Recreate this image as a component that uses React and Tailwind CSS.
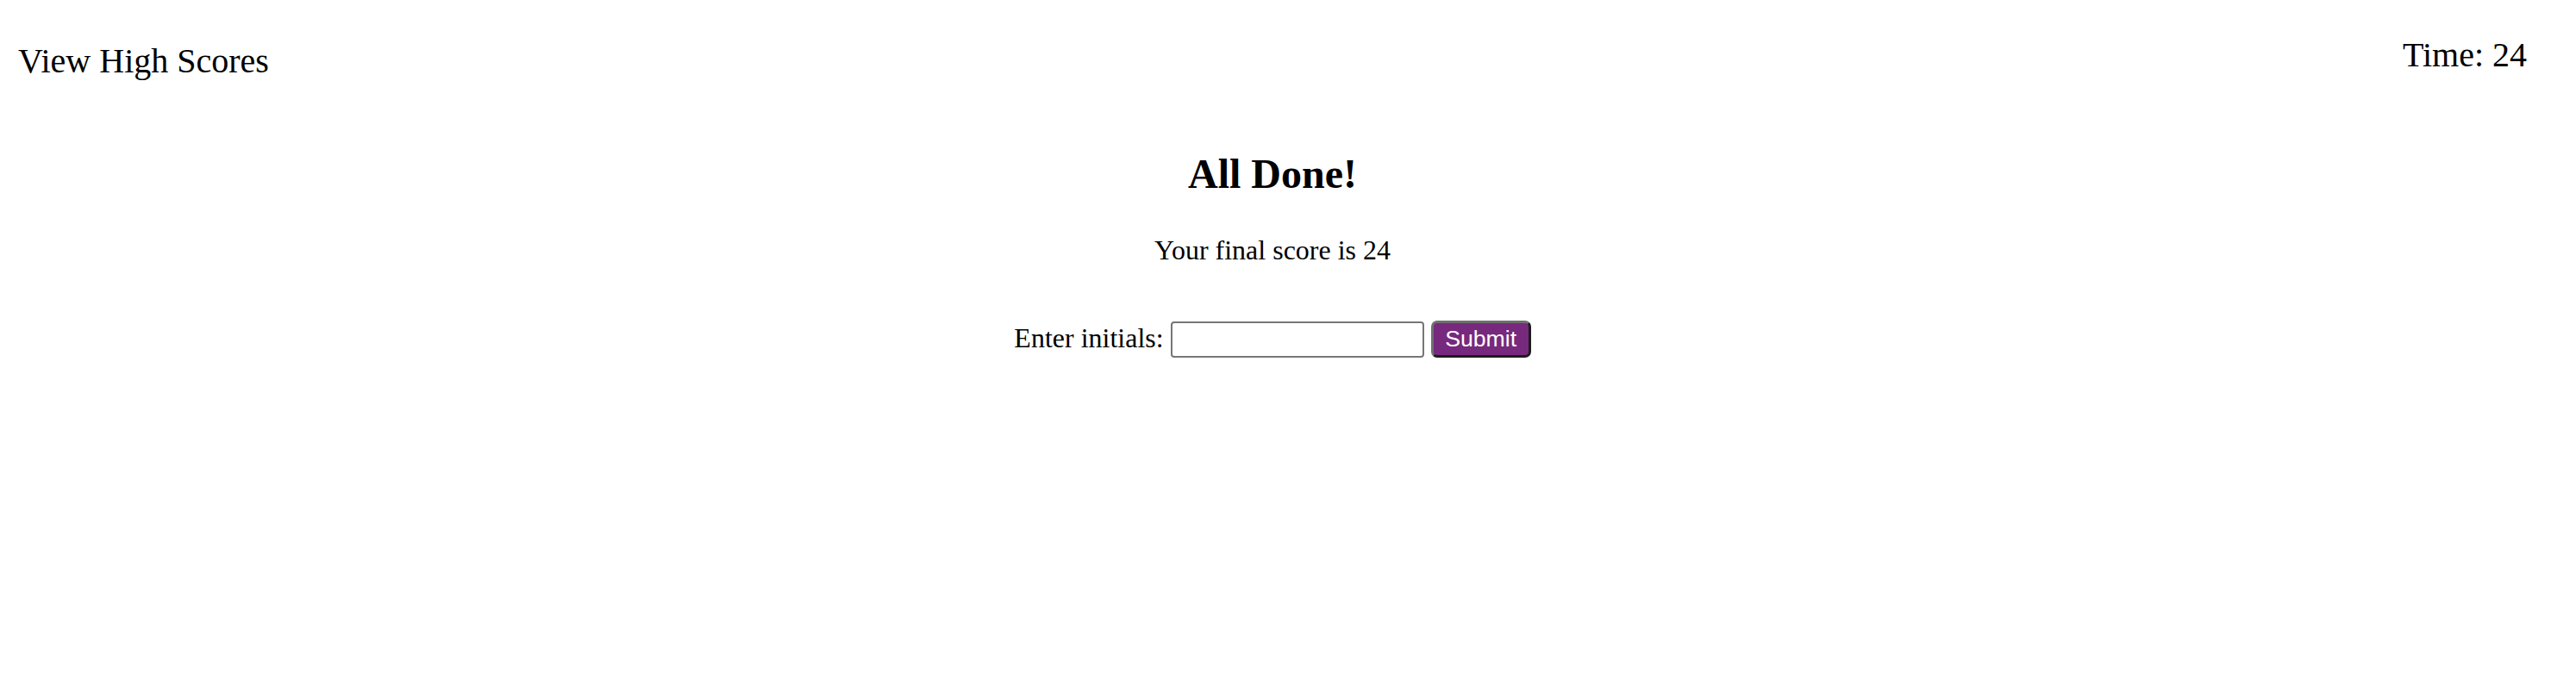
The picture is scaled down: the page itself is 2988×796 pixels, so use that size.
export default function App() {
  return (
    <div className="w-[2952px] min-h-[796px] bg-white text-black font-['Liberation_Serif','Times_New_Roman',serif]">
      {/* Header */}
      <header className="flex items-start justify-between px-[21px] pt-[44px]">
        <a className="pt-[7px] text-[40px] leading-none">View High Scores</a>
        <p className="text-[40px] leading-none">Time: 24</p>
      </header>

      {/* Result */}
      <main className="mt-[87px] flex flex-col items-center text-center">
        <h2 className="text-[48px] leading-none font-bold">All Done!</h2>
        <p className="mt-[48px] text-[32px] leading-none">Your final score is 24</p>
        <form className="mt-[66px] flex items-center gap-2">
          <label className="mb-[4px] text-[32px] leading-none">Enter initials:</label>
          <input
            type="text"
            className="w-[294px] h-[42px] border-2 border-[#767676] rounded-[4px] bg-white"
          />
          <button
            type="button"
            className="w-[116px] h-[43px] rounded-[7px] border-[3px] border-t-[#6f6f6f] border-l-[#6f6f6f] border-r-[#1c1c1c] border-b-[#1c1c1c] bg-[#77297d] text-white text-[26.67px] leading-none font-['Liberation_Sans',Arial,sans-serif]"
          >
            Submit
          </button>
        </form>
      </main>
    </div>
  );
}
